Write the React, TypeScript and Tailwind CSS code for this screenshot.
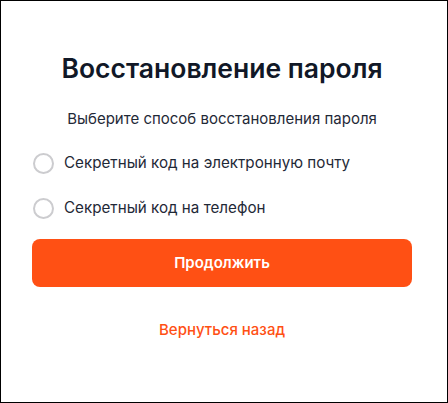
import React, { useState } from 'react'

const options = [
  { id: 'email', label: 'Секретный код на электронную почту' },
  { id: 'phone', label: 'Секретный код на телефон' },
];

const App = () => {
  const [selected, setSelected] = useState<string>('');

  return (
    <div className="w-[448px] h-[403px] border border-black bg-white font-['Inter',_'Noto_Sans',_sans-serif]">
      <div className="flex flex-col pl-[31px] pr-[35px] pt-[49px]">
        <h1 className="text-center text-[26.5px] leading-[36px] font-semibold text-[#111827]">
          Восстановление пароля
        </h1>
        <p className="mt-[23px] text-center text-[15px] leading-[20px] text-[#1f2937]">
          Выберите способ восстановления пароля
        </p>
        <div className="mt-[23px] flex flex-col gap-[23px]">
          {options.map((opt) => (
            <label key={opt.id} className="flex items-center gap-[10px] h-[22px] pl-[1px] cursor-pointer">
              <span
                onClick={() => setSelected(opt.id)}
                className="w-[21px] h-[21px] rounded-full border-2 border-[#cccccf] bg-white"
              />
              <span className="text-[15.2px] leading-[22px] text-[#1f2937]">{opt.label}</span>
            </label>
          ))}
        </div>
        <button className="mt-[20px] h-[48px] w-full rounded-[8px] bg-[#ff5014] text-white text-[15px] font-semibold">
          Продолжить
        </button>
        <button className="mt-[32px] self-center text-[15px] leading-[22px] font-medium text-[#ff5014]">
          Вернуться назад
        </button>
      </div>
    </div>
  );
}

export default App
